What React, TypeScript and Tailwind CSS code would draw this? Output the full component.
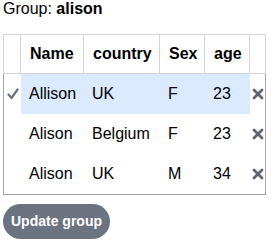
import React from 'react';

type Row = { name: string; country: string; sex: string; age: number; selected?: boolean };

const rows: Row[] = [
  { name: 'Allison', country: 'UK', sex: 'F', age: 23, selected: true },
  { name: 'Alison', country: 'Belgium', sex: 'F', age: 23 },
  { name: 'Alison', country: 'UK', sex: 'M', age: 34 },
];

const Check = () => (
  <svg width="12" height="12" viewBox="0 0 12 12" className="text-[#6b7280]">
    <path d="M1.5 6.5 L4.5 10 L10.5 1.5" fill="none" stroke="currentColor" strokeWidth="2.2" strokeLinecap="round" strokeLinejoin="round" />
  </svg>
);

const Cross = () => (
  <svg width="12" height="12" viewBox="0 0 12 12" className="text-[#5f6470]">
    <path d="M2 2 L10 10 M10 2 L2 10" fill="none" stroke="currentColor" strokeWidth="2.8" strokeLinecap="round" />
  </svg>
);

export default function App() {
  return (
    <div className="w-[274px] h-[244px] bg-white text-[16px] text-black pl-[3px] font-['Liberation_Sans',Arial,sans-serif]">
      <div className="leading-[18px]">
        Group: <span className="font-bold">alison</span>
      </div>

      <div className="mt-4 w-[263px]">
        {/* header */}
        <div className="flex h-[40px] border border-[#d4d4d8] font-bold">
          <div className="w-[17px] border-r border-[#d4d4d8]" />
          <div className="w-[63px] border-r border-[#d4d4d8] flex items-center pl-[9px]">Name</div>
          <div className="w-[76px] border-r border-[#d4d4d8] flex items-center pl-[9px]">country</div>
          <div className="w-[45px] border-r border-[#d4d4d8] flex items-center pl-[9px]">Sex</div>
          <div className="w-[45px] border-r border-[#d4d4d8] flex items-center pl-[9px]">age</div>
          <div className="flex-1" />
        </div>

        {/* body */}
        <div className="border border-t-0 border-[#a3a3a3]">
          {rows.map((r, i) => (
            <div key={i} className="flex h-[40px] items-stretch">
              <div className="w-[17px] flex items-center justify-center">{r.selected && <Check />}</div>
              <div className={`flex w-[229px] ${r.selected ? 'bg-[#dbeafe]' : ''}`}>
                <div className="w-[63px] flex items-center pl-[8px]">{r.name}</div>
                <div className="w-[76px] flex items-center pl-[8px]">{r.country}</div>
                <div className="w-[45px] flex items-center pl-[8px]">{r.sex}</div>
                <div className="w-[45px] flex items-center pl-[8px]">{r.age}</div>
              </div>
              <div className="flex-1 flex items-center justify-center">
                <Cross />
              </div>
            </div>
          ))}
        </div>
      </div>

      <button className="mt-[9px] h-[35px] px-2 rounded-full bg-[#6b7280] text-white text-[14px] font-bold">
        Update group
      </button>
    </div>
  );
}
